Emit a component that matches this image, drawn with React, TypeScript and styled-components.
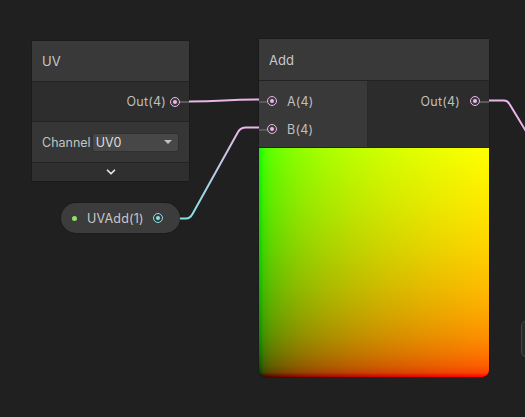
import React from 'react'
import styled, { createGlobalStyle } from 'styled-components'
import { ChevronDown } from 'lucide-react'

const PINK = '#eab6e8'
const CYAN = '#84e1e6'

const GlobalStyle = createGlobalStyle`
    html, body {
        margin: 0;
        padding: 0;
        background: #202020;
    }
    body {
        font-family: Inter, 'Noto Sans', sans-serif;
    }
`

// gamma-ish stops so the preview looks like the shader output
const ramp = (c: (v: number) => string) =>
    [0, 2, 5, 10, 18, 28, 40, 55, 75, 100]
        .map((p) => `${c(Math.round(255 * Math.pow(p / 100, 1 / 3)))} ${p}%`)
        .join(', ')

const App: React.FC = () => {
    return (
        <React.Fragment>
            <GlobalStyle />
            <Canvas>
                <Wires width={525} height={417}>
                    <defs>
                        <linearGradient
                            id="bWire"
                            gradientUnits="userSpaceOnUse"
                            x1="0"
                            y1="218"
                            x2="0"
                            y2="128">
                            <stop offset="0" stopColor={CYAN} />
                            <stop offset="1" stopColor={PINK} />
                        </linearGradient>
                    </defs>
                    <path
                        d="M189 101.5 C 224 101.5, 224 99.5, 259 99.5"
                        stroke={PINK}
                        strokeWidth={2}
                        fill="none"
                    />
                    <path
                        d="M180 218.5 L186 218.5 Q190 218.5 192.5 214 L238 132 Q240.5 127.5 246 127.5 L259 127.5"
                        stroke="url(#bWire)"
                        strokeWidth={2}
                        fill="none"
                    />
                    <path
                        d="M489 100.5 L504 100.5 Q507.5 100.5 509.5 104 L527 133"
                        stroke={PINK}
                        strokeWidth={2}
                        fill="none"
                    />
                </Wires>

                <Node left={32} top={41} width={157}>
                    <Title height={40}>UV</Title>
                    <OutputRow>
                        <PortLabel>Out(4)</PortLabel>
                        <Port color={PINK} gap={4} />
                        <Stub side="right" width={9} />
                    </OutputRow>
                    <ControlRow>
                        <ControlLabel>Channel</ControlLabel>
                        <Dropdown>
                            <span>UV0</span>
                            <Caret />
                        </Dropdown>
                    </ControlRow>
                    <CollapseBar>
                        <ChevronDown size={14} strokeWidth={3} color="#e6e6e6" />
                    </CollapseBar>
                </Node>

                <Node left={259} top={39} width={230} rounded>
                    <Title height={41}>Add</Title>
                    <Ports>
                        <Inputs>
                            <InputRow>
                                <Stub side="left" width={8} />
                                <Port color={PINK} />
                                <PortLabel>A(4)</PortLabel>
                            </InputRow>
                            <InputRow>
                                <Stub side="left" width={8} />
                                <Port color={PINK} />
                                <PortLabel>B(4)</PortLabel>
                            </InputRow>
                        </Inputs>
                        <Outputs>
                            <AddOutRow>
                                <PortLabel>Out(4)</PortLabel>
                                <Port color={PINK} gap={10} />
                                <Stub side="right" width={9} />
                            </AddOutRow>
                        </Outputs>
                    </Ports>
                    <Preview />
                </Node>

                <Pill left={61} top={203}>
                    <Dot />
                    <PillLabel>UVAdd(1)</PillLabel>
                    <Port color={CYAN} gap={9} />
                </Pill>

                <EdgeNode />
            </Canvas>
        </React.Fragment>
    )
}

export default App

interface IPlaced {
    left: number
    top: number
}

interface INode extends IPlaced {
    width: number
    rounded?: boolean
}

const Canvas = styled.div`
    position: relative;
    width: 525px;
    height: 417px;
    overflow: hidden;
    background: #202020;
`

const Wires = styled.svg`
    position: absolute;
    left: 0;
    top: 0;
    z-index: 2;
    pointer-events: none;
`

const Node = styled.div<INode>`
    position: absolute;
    left: ${(p) => p.left}px;
    top: ${(p) => p.top}px;
    width: ${(p) => p.width}px;
    display: flex;
    flex-direction: column;
    background: #2c2c2c;
    border-radius: ${(p) => (p.rounded ? '2px 2px 7px 7px' : '1px')};
    box-shadow: 0 0 0 1px #1b1b1b;
    z-index: 1;
`

const Title = styled.div<{ height: number }>`
    height: ${(p) => p.height}px;
    display: flex;
    align-items: center;
    padding-left: 10px;
    background: #393939;
    color: #c8c8c8;
    font-size: 13px;
    border-bottom: 1px solid #232323;
`

const OutputRow = styled.div`
    position: relative;
    height: 39px;
    display: flex;
    align-items: center;
    justify-content: flex-end;
    padding-right: 9px;
    background: #2d2d2d;
    border-bottom: 1px solid #232323;
`

const PortLabel = styled.span`
    color: #bfbfbf;
    font-size: 12.5px;
    letter-spacing: 0.2px;
`

const Port = styled.span<{ color: string; gap?: number }>`
    position: relative;
    width: 10px;
    height: 10px;
    box-sizing: border-box;
    border-radius: 50%;
    border: 1px solid ${(p) => p.color};
    background: #3a3a3a;
    margin-left: ${(p) => p.gap ?? 0}px;
    flex-shrink: 0;
    z-index: 3;
    &::after {
        content: '';
        position: absolute;
        left: 2px;
        top: 2px;
        width: 4px;
        height: 4px;
        border-radius: 50%;
        background: ${(p) => p.color};
    }
`

const Stub = styled.span<{ side: 'left' | 'right'; width: number }>`
    position: absolute;
    top: 50%;
    ${(p) => p.side}: 0;
    width: ${(p) => p.width}px;
    height: 2px;
    margin-top: -0.5px;
    background: #595959;
`

const ControlRow = styled.div`
    height: 40px;
    display: flex;
    align-items: center;
    gap: 1px;
    padding-left: 10px;
    background: #363636;
    border-bottom: 1px solid #232323;
`

const ControlLabel = styled.span`
    color: #c4c4c4;
    font-size: 12.5px;
    white-space: nowrap;
`

const Dropdown = styled.div`
    width: 87px;
    height: 19px;
    box-sizing: border-box;
    display: flex;
    align-items: center;
    justify-content: space-between;
    padding: 0 6px 0 3px;
    background: #474747;
    border: 1px solid #303030;
    border-radius: 3px;
    color: #dedede;
    font-size: 12.5px;
`

const Caret = styled.span`
    width: 0;
    height: 0;
    border-left: 4px solid transparent;
    border-right: 4px solid transparent;
    border-top: 4px solid #c2c2c2;
`

const CollapseBar = styled.div`
    height: 18px;
    display: flex;
    align-items: center;
    justify-content: center;
    background: #2f2f2f;
`

const Ports = styled.div`
    height: 66px;
    display: flex;
    border-bottom: 1px solid #232323;
`

const Inputs = styled.div`
    width: 108px;
    padding-top: 6px;
    background: #393939;
    border-right: 1px solid #2a2a2a;
`

const InputRow = styled.div`
    position: relative;
    height: 28px;
    display: flex;
    align-items: center;
    padding-left: 8px;
    ${Port} {
        margin-right: 10px;
    }
`

const Outputs = styled.div`
    flex: 1;
    padding-top: 6px;
    background: #2c2c2c;
`

const AddOutRow = styled.div`
    position: relative;
    height: 28px;
    display: flex;
    align-items: center;
    justify-content: flex-end;
    padding-right: 9px;
`

const Preview = styled.div`
    height: 229px;
    border-radius: 0 0 7px 7px;
    background-image: linear-gradient(
            to right,
            ${ramp((v) => `rgb(${v},0,0)`)}
        ),
        linear-gradient(to top, ${ramp((v) => `rgb(0,${v},0)`)});
    background-blend-mode: screen;
`

const Pill = styled.div<IPlaced>`
    position: absolute;
    left: ${(p) => p.left}px;
    top: ${(p) => p.top}px;
    width: 119px;
    height: 30px;
    box-sizing: border-box;
    display: flex;
    align-items: center;
    padding-left: 11px;
    background: #3c3c3c;
    border-radius: 15px;
    box-shadow: 0 0 0 1px #1c1c1c;
    z-index: 1;
`

const Dot = styled.span`
    width: 5px;
    height: 5px;
    border-radius: 50%;
    background: #90e065;
`

const PillLabel = styled.span`
    margin-left: 10px;
    color: #c8c8c8;
    font-size: 12.5px;
    letter-spacing: 0.2px;
`

const EdgeNode = styled.div`
    position: absolute;
    left: 522px;
    top: 322px;
    width: 40px;
    height: 34px;
    border-radius: 4px;
    background: #2a2a2a;
    box-shadow: 0 0 0 1px #444;
`
